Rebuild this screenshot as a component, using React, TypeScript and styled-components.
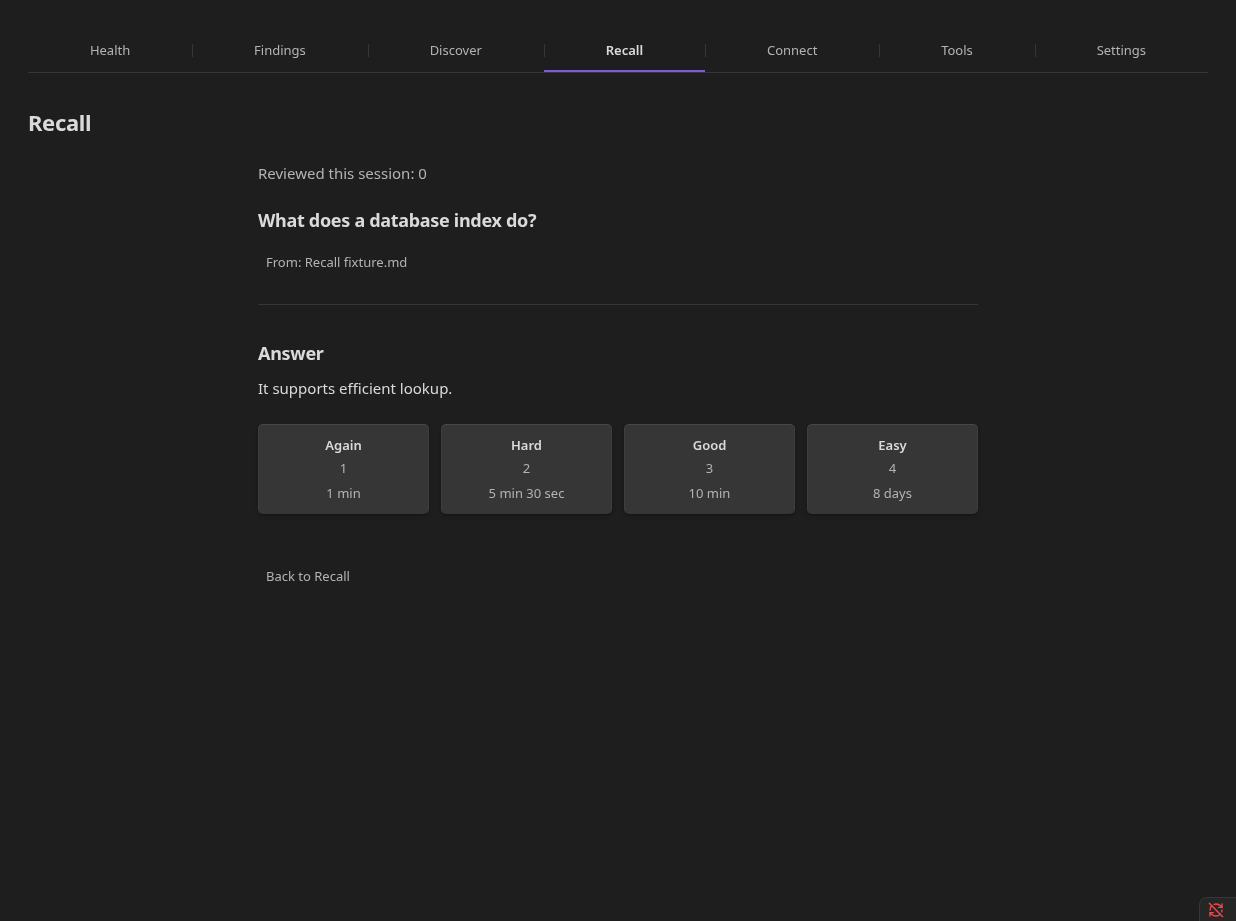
import React from "react";
import styled, { createGlobalStyle } from "styled-components";
import { RefreshCwOff } from "lucide-react";

const Global = createGlobalStyle`
  html, body { margin: 0; padding: 0; height: 100%; background: #1e1e1e; }
  body { font-family: "Noto Sans", "Liberation Sans", sans-serif; color: #dadada; overflow: hidden; }
  * { box-sizing: border-box; }
`;
const Page = styled.div`
  height: 921px;
  padding: 28px 28px 0;
  will-change: transform;
`;
const Tabs = styled.nav`
  display: flex;
  height: 45px;
  border-bottom: 1px solid #363636;
`;
const Tab = styled.div<{ $active?: boolean; $first?: boolean }>`
  position: relative;
  flex: 1 1 auto;
  display: flex;
  align-items: center;
  justify-content: center;
  padding: 0 16px 1px;
  font-size: 13px;
  line-height: 18px;
  font-weight: ${(p) => (p.$active ? 600 : 400)};
  color: ${(p) => (p.$active ? "#dadada" : "#b3b3b3")};
  &::after {
    content: "";
    display: ${(p) => (p.$first ? "none" : "block")};
    position: absolute;
    left: 0;
    top: 16px;
    height: 13px;
    width: 1px;
    background: #363636;
  }
  &::before {
    content: "";
    display: ${(p) => (p.$active ? "block" : "none")};
    position: absolute;
    left: 0;
    right: 0;
    bottom: 0;
    height: 2px;
    background: #7f5ae0;
  }
`;
const Title = styled.h1`
  margin: 35px 0 0;
  font-size: 22px;
  line-height: 28px;
  letter-spacing: -0.015em;
  font-weight: 700;
  color: #dadada;
`;
const Content = styled.main`
  width: 720px;
  margin: 26px auto 0;
`;
const Session = styled.div`
  font-size: 15px;
  line-height: 22px;
  color: #b3b3b3;
`;
const Question = styled.h2`
  margin: 24px 0 0;
  font-size: 18px;
  line-height: 25px;
  letter-spacing: -0.017em;
  font-weight: 700;
  color: #dadada;
`;
const Meta = styled.div`
  margin-top: 20px;
  padding: 0 8px;
  font-size: 13px;
  line-height: 18px;
  color: #b3b3b3;
`;
const Rule = styled.hr`
  margin: 33px 0 0;
  border: 0;
  border-top: 1px solid #363636;
`;
const AnswerTitle = styled.h3`
  margin: 36px 0 0;
  font-size: 18px;
  line-height: 25px;
  letter-spacing: -0.017em;
  font-weight: 700;
  color: #dadada;
`;
const AnswerText = styled.p`
  margin: 11px 0 0;
  font-size: 15px;
  line-height: 22px;
  color: #dadada;
`;
const Grades = styled.div`
  display: grid;
  grid-template-columns: repeat(4, 1fr);
  gap: 12px;
  margin-top: 25px;
`;
const Grade = styled.button`
  height: 90px;
  padding: 12px 8px 0;
  border: 0;
  border-radius: 5px;
  background: #363636;
  box-shadow: inset 0 0.5px 0.5px 0.5px rgba(255, 255, 255, 0.09), 0 2px 4px 0 rgba(0, 0, 0, 0.15),
    0 1px 1.5px 0 rgba(0, 0, 0, 0.1), 0 1px 2px 0 rgba(0, 0, 0, 0.2);
  font-family: inherit;
  display: flex;
  flex-direction: column;
  align-items: center;
`;
const GradeName = styled.span`
  font-size: 13px;
  line-height: 18px;
  font-weight: 600;
  color: #dadada;
`;
const GradeKey = styled.span`
  margin-top: 5px;
  font-size: 13px;
  line-height: 18px;
  color: #b3b3b3;
`;
const GradeTime = styled.span`
  margin-top: 7px;
  font-size: 13px;
  line-height: 18px;
  color: #b3b3b3;
`;
const BackLink = styled.div`
  margin-top: 53px;
  padding: 0 8px;
  font-size: 13px;
  line-height: 18px;
  color: #b3b3b3;
`;
const StatusBar = styled.div`
  position: fixed;
  right: 0;
  bottom: 0;
  width: 37px;
  height: 24px;
  display: flex;
  align-items: center;
  padding-left: 8px;
  padding-top: 1px;
  background: #262626;
  border-top: 1px solid #363636;
  border-left: 1px solid #363636;
  border-top-left-radius: 8px;
  color: #fb464c;
`;

const tabs = ["Health", "Findings", "Discover", "Recall", "Connect", "Tools", "Settings"];
const grades = [
  { name: "Again", key: "1", time: "1 min" },
  { name: "Hard", key: "2", time: "5 min 30 sec" },
  { name: "Good", key: "3", time: "10 min" },
  { name: "Easy", key: "4", time: "8 days" },
];

export default function App() {
  return (
    <Page>
      <Global />
      <Tabs>
        {tabs.map((t, i) => (
          <Tab key={t} $active={t === "Recall"} $first={i === 0}>
            {t}
          </Tab>
        ))}
      </Tabs>
      <Title>Recall</Title>
      <Content>
        <Session>Reviewed this session: 0</Session>
        <Question>What does a database index do?</Question>
        <Meta>From: Recall fixture.md</Meta>
        <Rule />
        <AnswerTitle>Answer</AnswerTitle>
        <AnswerText>It supports efficient lookup.</AnswerText>
        <Grades>
          {grades.map((g) => (
            <Grade key={g.name}>
              <GradeName>{g.name}</GradeName>
              <GradeKey>{g.key}</GradeKey>
              <GradeTime>{g.time}</GradeTime>
            </Grade>
          ))}
        </Grades>
        <BackLink>Back to Recall</BackLink>
      </Content>
      <StatusBar>
        <RefreshCwOff size={16} strokeWidth={2} />
      </StatusBar>
    </Page>
  );
}
